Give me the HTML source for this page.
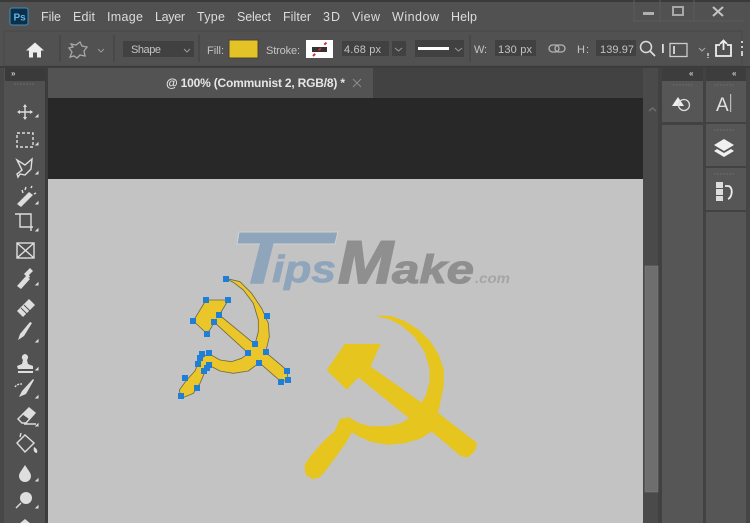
<!DOCTYPE html>
<html><head><meta charset="utf-8"><style>
html,body{margin:0;padding:0;background:#515151;width:750px;height:523px;overflow:hidden}
svg{display:block;filter:blur(.35px)}
text{font-family:"Liberation Sans",sans-serif}
.m{font-size:12.5px;fill:#dcdcdc}
.o{font-size:11px;fill:#c4c4c4}
.i{fill:none;stroke:#dedede;stroke-width:1.4}
.f{fill:#dedede}
</style></head><body>
<svg width="750" height="523" viewBox="0 0 750 523" xmlns="http://www.w3.org/2000/svg">
<rect width="750" height="523" fill="#515151"/>
<!-- title bar -->
<rect x="0" y="0" width="750" height="2" fill="#3a3a3a"/>
<rect x="10" y="8" width="18" height="17" rx="2" fill="#0d2f47" stroke="#3f8fc0" stroke-width="1"/>
<text x="13.500" y="20.500" font-size="10" font-weight="bold" fill="#5cb8ee">Ps</text>
<text class="m" x="41" y="21" textLength="20">File</text>
<text class="m" x="73" y="21" textLength="22">Edit</text>
<text class="m" x="107" y="21" textLength="36">Image</text>
<text class="m" x="155" y="21" textLength="30">Layer</text>
<text class="m" x="197" y="21" textLength="28">Type</text>
<text class="m" x="237" y="21" textLength="34">Select</text>
<text class="m" x="283" y="21" textLength="28">Filter</text>
<text class="m" x="323" y="21" textLength="17">3D</text>
<text class="m" x="352" y="21" textLength="28">View</text>
<text class="m" x="392" y="21" textLength="47">Window</text>
<text class="m" x="451" y="21" textLength="26">Help</text>
<path d="M634 0V21H744M660 0V21M694 0V21" fill="none" stroke="#5c5c5c" stroke-width="1"/>
<rect x="643" y="12" width="11" height="3" fill="#b0b0b0"/>
<rect x="673" y="7" width="10" height="8" fill="none" stroke="#a8a8a8" stroke-width="2"/>
<path d="M713 7l10 9M723 7l-10 9" stroke="#c4c4c4" stroke-width="2" fill="none"/>
<!-- options bar -->
<rect x="4" y="31" width="738" height="35" fill="#515151" stroke="#464646"/>
<rect x="0" y="66" width="750" height="2" fill="#3c3c3c"/>
<path d="M26 50.500l9-8 9 8h-3v7h-4v-5h-4v5h-4v-7z" fill="#eee"/>
<path d="M60 35V62M114 35V62M199 35V62M470 35V62" stroke="#454545" stroke-width="1.500"/>
<path d="M71 44l5 1 4-3 2 4 5 1-3 4 1 5-5-1-3 3-3-2-4 1 2-5-3-4 4-1z" fill="none" stroke="#a8a8a8" stroke-width="1.300"/>
<path d="M98 49l3 3 3-3" fill="none" stroke="#999"/>
<rect x="123" y="41" width="71" height="16" fill="#414141"/>
<text class="o" x="131" y="53" textLength="30">Shape</text>
<path d="M184 49l3 3 3-3" fill="none" stroke="#999"/>
<text class="o" x="207" y="54" textLength="17">Fill:</text>
<rect x="229" y="40" width="29" height="18" fill="#e4c326" stroke="#4a4433"/>
<text class="o" x="266" y="54" textLength="34">Stroke:</text>
<rect x="306" y="40" width="27" height="18" fill="#fff"/>
<rect x="312" y="47" width="15" height="5" fill="#333"/>
<path d="M313 56l14-14" stroke="#d03030" stroke-width="2" stroke-dasharray="3 5"/>
<rect x="342" y="41" width="47" height="15" fill="#414141"/>
<text class="o" x="344" y="53" textLength="37">4.68 px</text>
<rect x="392" y="41" width="14" height="15" fill="#414141"/>
<path d="M395 48l3.500 3 3.500-3" fill="none" stroke="#999"/>
<rect x="415" y="40" width="49" height="17" fill="#414141"/>
<rect x="418" y="47" width="31" height="3" fill="#fff"/>
<path d="M455 48l3.500 3 3.500-3" fill="none" stroke="#999"/>
<text class="o" x="474" y="53" textLength="13">W:</text>
<rect x="495" y="40" width="41" height="16" fill="#414141"/>
<text class="o" x="498" y="53" textLength="34">130 px</text>
<rect x="549" y="45" width="10" height="7" rx="3.500" fill="none" stroke="#b4b4b4" stroke-width="1.300"/>
<rect x="555" y="45" width="10" height="7" rx="3.500" fill="none" stroke="#b4b4b4" stroke-width="1.300"/>
<text class="o" x="577" y="53" textLength="12">H:</text>
<rect x="596" y="40" width="40" height="16" fill="#414141"/>
<text class="o" x="600" y="53" textLength="34">139.97</text>
<circle cx="646" cy="47" r="5.500" fill="none" stroke="#ddd" stroke-width="1.500"/>
<path d="M650 51l5 5" stroke="#ddd" stroke-width="1.800"/>
<rect x="662" y="44" width="1.800" height="9" fill="#ddd"/>
<rect x="670" y="43.500" width="17" height="13" fill="none" stroke="#ccc" stroke-width="1.300"/>
<rect x="673" y="46" width="2" height="8" fill="#ccc"/>
<path d="M699 48l3 3 3-3" fill="none" stroke="#aaa"/>
<path d="M708 53v3M708 57v1" stroke="#ddd" stroke-width="1.300"/>
<path d="M720 45h-4v11h15v-11h-4M723.500 50v-9M720 44l3.500-3.500 3.500 3.500" fill="none" stroke="#eee" stroke-width="1.800"/>
<path d="M742 41v2M742 46v2M742 51v5" stroke="#ccc" stroke-width="2"/>
<!-- tab row -->
<rect x="48" y="68" width="595" height="30" fill="#424242"/>
<rect x="48" y="68" width="325" height="30" fill="#535353"/>
<text x="166" y="87" font-size="12" font-weight="bold" fill="#e6e6e6" textLength="179">@ 100% (Communist 2, RGB/8) *</text>
<path d="M353 79l8 8M361 79l-8 8" stroke="#8d8d8d"/>
<!-- left toolbar -->
<rect x="5" y="68" width="40" height="13" fill="#3a3a3a"/>
<text x="11" y="76" font-size="8" font-weight="bold" fill="#ccc">»</text>
<path d="M14 84h21" stroke="#6a6a6a" stroke-dasharray="2 1"/>
<rect x="0" y="68" width="4" height="455" fill="#474747"/>
<rect x="45" y="68" width="3" height="455" fill="#3c3c3c"/>
<!-- pasteboard & canvas -->
<rect x="48" y="98" width="595" height="81" fill="#282828"/>
<rect x="48" y="179" width="595" height="344" fill="#c3c3c3"/>
<!-- scrollbar -->
<rect x="643" y="68" width="19" height="455" fill="#4a4a4a"/>
<rect x="658" y="68" width="4" height="455" fill="#414141"/>
<path d="M649 111l3.500-3 3.500 3" fill="none" stroke="#6c6c6c" stroke-width="1.500"/>
<rect x="645" y="266" width="13" height="226" fill="#6e6e6e" stroke="#7a7a7a" stroke-width=".6"/>
<!-- right panels -->
<rect x="662" y="68" width="88" height="13" fill="#3d3d3d"/>
<rect x="662" y="81" width="41" height="442" fill="#565656"/>
<rect x="703" y="68" width="3" height="455" fill="#424242"/>
<rect x="706" y="81" width="40" height="442" fill="#565656"/>
<rect x="746" y="68" width="4" height="455" fill="#454545"/>
<rect x="662" y="122" width="41" height="3" fill="#424242"/>
<rect x="706" y="122" width="40" height="2" fill="#424242"/>
<rect x="706" y="166" width="40" height="2" fill="#424242"/>
<rect x="706" y="210" width="40" height="2" fill="#424242"/>
<text x="689" y="76" font-size="8" font-weight="bold" fill="#ccc">«</text>
<text x="732" y="76" font-size="8" font-weight="bold" fill="#ccc">«</text>
<path d="M673 85h20M714 85h20M714 130h20M714 174h20" stroke="#6a6a6a" stroke-dasharray="2 1"/>
<path d="M672 106l6-9 6 9z" fill="#eee"/>
<circle cx="684" cy="105" r="5.500" fill="none" stroke="#ddd" stroke-width="1.300"/>
<text x="716" y="111" font-size="19" fill="#e0e0e0">A</text>
<rect x="730" y="94" width="1.200" height="18" fill="#bbb"/>
<path d="M724 139l10 6-10 6-10-6z" fill="#f0f0f0"/>
<path d="M714 151l10 6 10-6-3-2-7 4-7-4z" fill="#f0f0f0"/>
<rect x="716" y="182" width="7" height="6" fill="#ddd"/><rect x="716" y="189" width="7" height="6" fill="#ddd"/><rect x="716" y="196" width="7" height="5" fill="#ddd"/>
<path d="M725 186h3c5 0 5 11 0 13" fill="none" stroke="#eee" stroke-width="1.800"/>
<!-- tools -->
<path d="M25 106v12M19 112h12" class="i"/><path d="M25 104l-2 3h4zM25 120l-2-3h4zM17 112l3-2v4zM33 112l-3-2v4z" class="f"/>
<rect x="17" y="133" width="16" height="14" class="i" stroke-dasharray="3 2"/>
<path d="M17 160l8 5 7-6-1 10-6 6-5-1-2 3-1-3 5-4z" class="i"/>
<path d="M17 204l12-12 4 3-12 12z" class="f"/><path d="M22 190l1 3M26 187l-1 3M32 186l-1 2M36 193l-2 1" class="i"/>
<path d="M15 214h5v13h13M20 214h11v17" class="i" stroke-width="1.800"/>
<rect x="17" y="243" width="17" height="15" class="i"/><path d="M17 243l17 15M34 243l-17 15" class="i"/>
<path d="M17 286l9-10 4 3-9 10z M26 272l4-4 3 3-4 4 1 2-2 1-4-4z" class="f"/>
<path d="M17 311l12-12 6 6-12 12z" class="f"/><path d="M21 308l7 7M24 305l7 7" stroke="#555" stroke-width="1"/>
<path d="M18 340l2-6 10-12 2 1-8 13z" class="f"/>
<path d="M18 369h15v-3l-5-2-1-4c3-4-1-6-2-6s-5 2-2 6l-1 4-5 2zM18 371h15v2h-15z" class="f"/>
<path d="M19 397l3-6 11-12 1 1-8 14z" class="f"/><path d="M15 387c2-3 5-3 7-3" class="i" stroke-dasharray="2 1"/>
<path d="M18 419l11-11 6 5-9 10h-4zM24 424h12" class="i"/><path d="M22 414l7-6 6 5-6 6z" class="f"/>
<path d="M17 443l8-8 9 8-9 9z" class="i"/><path d="M20 437l1-4" class="i"/><path d="M34 447c2 1 4 3 3 6-3 0-4-3-3-6z" class="f"/>
<path d="M25 465c3 5 6 8 6 11a6 6 0 0 1-12 0c0-3 3-6 6-11z" class="f"/>
<circle cx="26" cy="498" r="6" class="f"/><path d="M21 503l-5 5" class="i" stroke-width="2.400"/>
<path d="M25 519l-6 5h12z" class="f"/>
<path d="M36 117h2v-2zM36 145h2v-2zM36 174h2v-2zM36 204h2v-2zM36 231h2v-2zM36 285h2v-2zM36 342h2v-2zM36 370h2v-2zM36 398h2v-2zM36 426h2v-2zM36 481h2v-2zM36 508h2v-2z" fill="#ddd" stroke="#ddd"/>
<!-- watermark -->
<path d="M239 232H338L335 244H237Z" fill="#8fa5bc" stroke="#d2d2d2" stroke-width="1"/>
<g font-style="italic" font-weight="bold">
<text x="0" y="0" font-size="72" fill="#8fa5bc" transform="translate(233,284) scale(1.300,1)">T</text>
<text x="272" y="282" font-size="38" fill="#8fa5bc" stroke="#8fa5bc" stroke-width=".8" textLength="64" lengthAdjust="spacingAndGlyphs">ips</text>
<text x="338" y="283" font-size="60" fill="#8f8f8f" stroke="#8f8f8f" stroke-width="1.800" textLength="55" lengthAdjust="spacingAndGlyphs">M</text>
<text x="392" y="283" font-size="40" fill="#8f8f8f" stroke="#8f8f8f" stroke-width="1" textLength="82" lengthAdjust="spacingAndGlyphs">ake</text>
<text x="475" y="283" font-size="14" fill="#a5a5a5" textLength="35" lengthAdjust="spacingAndGlyphs">.com</text>
</g>
<!-- large hammer & sickle -->
<g transform="translate(295,305) scale(.33333)">
<path d="M250 33L290 35L330 50L370 75L405 110L430 150L445 195L445 240L435 290L428 325L545 415L538 438L518 456L498 452L410 378L375 400L330 413L280 418L230 410L190 392L170 380L150 415L125 450L92 495L72 517L50 520L33 507L30 482L45 457L88 408L120 380L135 345L160 338L190 355L225 365L280 365L320 355L345 340L190 215L155 252L97 195L150 118L255 118L225 185L380 295L395 270L405 230L405 190L390 140L360 95L320 60L285 42Z" fill="#e6c51f" stroke="#e6c51f" stroke-width="3" stroke-linejoin="round"/>
</g>
<!-- small hammer & sickle -->
<g transform="translate(170,265) scale(.33333)">
<path d="M167 40L210 50L245 85L275 130L295 175L298 215L287 262L350 315L355 345L333 350L268 293L235 318L190 325L150 318L125 305L105 320L90 355L70 385L33 400L28 375L50 345L75 318L88 285L115 265L150 285L185 290L215 280L235 265L133 172L112 207L70 168L108 105L175 105L148 150L255 238L265 200L265 165L250 115L220 75L190 52Z" fill="#ebc62a" stroke="#6b6a4a" stroke-width="2.500" stroke-linejoin="round"/>
</g>
<g fill="#1f7fd6">
<rect x="223" y="276" width="6" height="6"/><rect x="203" y="297" width="6" height="6"/><rect x="225" y="297" width="6" height="6"/><rect x="216" y="312" width="6" height="6"/><rect x="211" y="319" width="6" height="6"/><rect x="190" y="318" width="6" height="6"/><rect x="204" y="331" width="6" height="6"/><rect x="264" y="313" width="6" height="6"/><rect x="252" y="341" width="6" height="6"/><rect x="245" y="350" width="6" height="6"/><rect x="263" y="349" width="6" height="6"/><rect x="256" y="360" width="6" height="6"/><rect x="284" y="368" width="6" height="6"/><rect x="285" y="377" width="6" height="6"/><rect x="278" y="379" width="6" height="6"/><rect x="206" y="350" width="6" height="6"/><rect x="199" y="351" width="6" height="6"/><rect x="197" y="355" width="6" height="6"/><rect x="195" y="361" width="6" height="6"/><rect x="206" y="362" width="6" height="6"/><rect x="204" y="365" width="6" height="6"/><rect x="201" y="368" width="6" height="6"/><rect x="182" y="375" width="6" height="6"/><rect x="194" y="385" width="6" height="6"/><rect x="178" y="393" width="6" height="6"/>
</g>
</svg>
</body></html>
